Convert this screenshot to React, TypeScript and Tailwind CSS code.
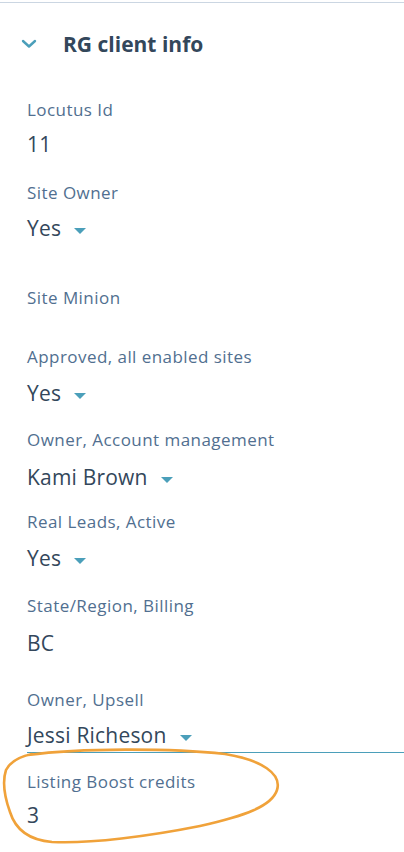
import React from "react";

const Caret = () => (
  <svg width="12" height="6" viewBox="0 0 12 6" className="ml-[13px] mt-[12px] shrink-0">
    <path d="M0 0 L12 0 L6 6 Z" fill="#4b9fba" />
  </svg>
);

type F = {
  label: string;
  value?: string;
  caret?: boolean;
  lmt: string;
  vmt?: string;
  underline?: boolean;
};

const fields: F[] = [
  { label: "Locutus Id", value: "11", lmt: "mt-[40px]", vmt: "mt-[10px]" },
  { label: "Site Owner", value: "Yes", caret: true, lmt: "mt-[25px]", vmt: "mt-[11px]" },
  { label: "Site Minion", lmt: "mt-[46px]" },
  { label: "Approved, all enabled sites", value: "Yes", caret: true, lmt: "mt-[35px]", vmt: "mt-[12px]" },
  { label: "Owner, Account management", value: "Kami Brown", caret: true, lmt: "mt-[23px]", vmt: "mt-[13px]" },
  { label: "Real Leads, Active", value: "Yes", caret: true, lmt: "mt-[21px]", vmt: "mt-[12px]" },
  { label: "State/Region, Billing", value: "BC", lmt: "mt-[24px]", vmt: "mt-[13px]" },
  { label: "Owner, Upsell", value: "Jessi Richeson", caret: true, lmt: "mt-[33px]", vmt: "mt-[11px]", underline: true },
  { label: "Listing Boost credits", value: "3", lmt: "mt-[17px]", vmt: "mt-[9px]" },
];

export default function App() {
  return (
    <div
      className="relative w-[404px] h-[852px] bg-white overflow-hidden"
      style={{ fontFamily: '"Open Sans", "Noto Sans", Arial, sans-serif' }}
    >
      <div className="mt-[2px] border-t border-[#cbd6e2]" />
      <div className="mt-[27px] h-[28px] flex items-center">
        <svg width="16" height="10" viewBox="0 0 16 10" className="ml-[21px]">
          <path d="M2 2 L8 7.5 L14 2" fill="none" stroke="#4b9fba" strokeWidth="2.4" strokeLinecap="round" strokeLinejoin="round" />
        </svg>
        <div className="ml-[26px] text-[21px] font-bold text-[#33475b] leading-[28px]">
          RG client info
        </div>
      </div>
      <div className="pl-[27px]">
        {fields.map((f) => (
          <div key={f.label}>
            <div className={`${f.lmt} h-[24px] leading-[24px] text-[17px] tracking-[0.45px] text-[#516f90]`}>{f.label}</div>
            {f.value !== undefined && (
              <div
                className={`${f.vmt} flex items-start text-[21px] tracking-[0.2px] text-[#33475b] ${
                  f.underline ? "h-[30px] border-b border-[#4b9fba]" : "h-[24px]"
                }`}
              >
                <span className="leading-[24px]">{f.value}</span>
                {f.caret && <Caret />}
              </div>
            )}
          </div>
        ))}
      </div>
      <svg className="absolute left-0 top-0 pointer-events-none" width="404" height="852" viewBox="0 0 404 852">
        <path
          d="M28 755 C 80 748, 170 748, 225 754 C 262 760, 282 774, 277 790 C 272 806, 245 816, 200 826 C 150 836, 90 844, 52 842 C 28 840, 15 828, 10 812 C 5 798, 2 782, 6 770 C 10 762, 18 757, 32 754"
          fill="none"
          stroke="#f0a23a"
          strokeWidth="2.6"
          strokeLinecap="round"
        />
      </svg>
    </div>
  );
}
